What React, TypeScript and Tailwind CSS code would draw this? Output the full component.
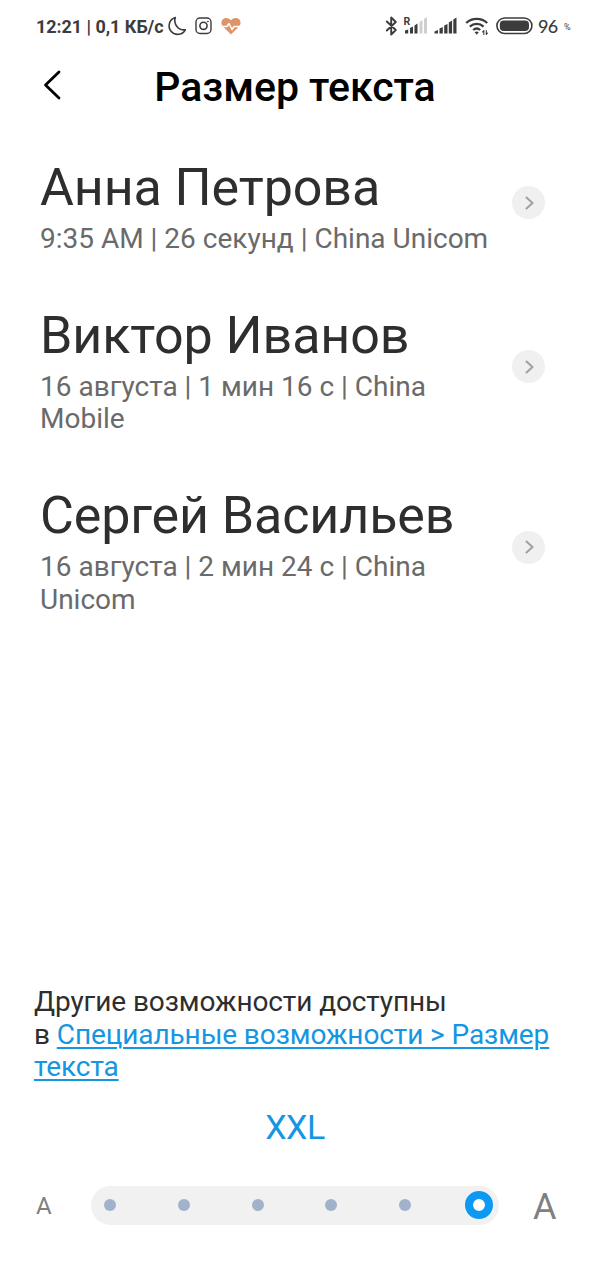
import { ReactNode } from "react";

interface Call {
    name: string;
    details: string;
}

const calls: Call[] = [
    { name: "Анна Петрова", details: "9:35 AM | 26 секунд | China Unicom" },
    { name: "Виктор Иванов", details: "16 августа | 1 мин 16 с | China Mobile" },
    { name: "Сергей Васильев", details: "16 августа | 2 мин 24 с | China Unicom" },
];

const sizes = ["XS", "S", "M", "L", "XL", "XXL"];

interface IconProps {
    width: number;
    height: number;
    className?: string;
    children: ReactNode;
}

function Icon({ width, height, className, children }: IconProps) {
    return (
        <svg
            width={width}
            height={height}
            viewBox={`0 0 ${width} ${height}`}
            fill="none"
            stroke="currentColor"
            strokeLinecap="round"
            strokeLinejoin="round"
            className={`shrink-0 ${className ?? ""}`}
        >
            {children}
        </svg>
    );
}

function StatusBar() {
    return (
        <div className="flex h-[52px] items-center pl-9 text-[#3c3c3c]">
            <span className="w-[130px] text-[18px] font-bold tracking-[-0.05px] whitespace-nowrap">
                12:21 | 0,1 КБ/с
            </span>
            <Icon width={20} height={20} className="ml-[1px]">
                <path
                    d="M8.300 1.500A8.600 8.600 0 1 0 18.300 13.800A9.400 9.400 0 0 1 8.300 1.500z"
                    strokeWidth="1.600"
                />
            </Icon>
            <Icon width={18} height={18} className="ml-[8px]">
                <rect x="1" y="1" width="15" height="15.500" rx="4" strokeWidth="1.400" />
                <circle cx="8.500" cy="8.800" r="3.600" strokeWidth="1.600" />
                <circle cx="12.800" cy="4.600" r="0.500" strokeWidth="0.800" />
            </Icon>
            <Icon width={20} height={18} className="ml-[8px]">
                <path
                    d="M10 17.500L2.200 9.800C-3 4 4.500-2.500 10 3.200C15.500-2.500 23 4 17.800 9.800z"
                    fill="#dd9468"
                    stroke="none"
                />
                <path d="M1 9.500h5l2-3 3 6 2-3h6" stroke="#fff" strokeWidth="1.500" />
            </Icon>
            <Icon width={14} height={20} className="ml-[144px]">
                <path d="M1.800 5.500l9 8.500-4.600 4.500V1.500l4.600 4.500-9 8.500" strokeWidth="1.900" />
            </Icon>
            {/* Roaming signal */}
            <Icon width={24} height={20} className="ml-[5px]">
                <g stroke="none" fill="currentColor">
                    <text x="-0.500" y="8.500" fontSize="10.500" fontWeight="700">R</text>
                    <path d="M1 14.500l3.200-1v4H1zM6 12l3-1.500v7H6zM10.500 9.500l3-2v10h-3z" />
                    <path d="M15.500 6l3-2v13.500h-3zM20 3l3-2v16.500h-3z" fill="#cfcfcf" />
                </g>
            </Icon>
            <Icon width={24} height={20} className="ml-[6px]">
                <path
                    d="M0.500 15.500l3.500-1.500v3.500H0.500zM5.500 12.500l3.300-1.500v6.500H5.500zM10.200 9.500l3.300-1.500v9.500h-3.300zM14.800 6.500l3.300-2v13h-3.300zM19.300 3.500l3.200-2v16h-3.200z"
                    fill="currentColor"
                    stroke="none"
                />
            </Icon>
            <Icon width={24} height={20} className="ml-[7px]">
                <path
                    d="M1.200 7c6-5.400 15-5.400 21 0M4.800 10.600c4-3.700 9.800-3.700 13.800 0M8.200 14c2.200-1.900 4.800-1.900 7 0"
                    strokeWidth="2.300"
                    strokeLinecap="butt"
                />
                <path d="M9.600 16.200q2.100-1.600 4.200 0L11.700 18.800z" fill="currentColor" stroke="none" />
                <path d="M18.800 18.500v-4l-1.300 1.500M21.300 14.500v4l1.300-1.500" strokeWidth="1.100" />
            </Icon>
            <Icon width={38} height={18} className="ml-[7px]">
                <rect x="0.900" y="1" width="35" height="15.500" rx="7.750" strokeWidth="1.600" />
                <rect x="3.800" y="3.600" width="29.200" height="10.400" rx="4" fill="currentColor" stroke="none" />
            </Icon>
            <span className="ml-[4px] w-[19px] font-['Lato'] text-[18px] font-medium tracking-[-0.8px]">96</span>
            <span className="ml-[7px] mt-1 text-[9px]">%</span>
        </div>
    );
}

function CallItem({ name, details }: Call) {
    return (
        <div className="flex items-center justify-between pr-[45px] pb-[49.3px] pl-10">
            <div className="w-[450px]">
                <h2 className="text-[52px] leading-[61px] tracking-[-0.1px] whitespace-nowrap text-[#2e2e2e]">{name}</h2>
                <p className="mt-[5px] text-[28px] leading-[32.5px] text-[#6a6a6a]">{details}</p>
            </div>
            <div className="mb-[7px] flex size-[33px] items-center justify-center rounded-full bg-[#f0f0f0] text-[#a0a0a0]">
                <Icon width={10} height={16} className="ml-0.5">
                    <path d="M1.500 2.500l6 5.500-6 5.500" strokeWidth="2" />
                </Icon>
            </div>
        </div>
    );
}

function SizeSlider() {
    return (
        <div className="flex h-[39px] items-center text-[#808080]">
            <span className="w-[91px] pt-0.5 pl-9 text-[24px]">A</span>
            <div className="flex h-[39px] w-[408px] items-center justify-between rounded-full bg-[#f1f1f1] pr-1.5 pl-[13px]">
                {sizes.map((size) =>
                    size === "XXL" ? (
                        <div key={size} className="-ml-2 size-7 rounded-full border-8 border-[#0d99f2] bg-white" />
                    ) : (
                        <div key={size} className="size-3 rounded-full bg-[#a1b2ca]" />
                    )
                )}
            </div>
            <span className="pt-1 pl-[34px] text-[36px]">A</span>
        </div>
    );
}

export default function App() {
    return (
        <div className="flex h-[1280px] w-[590px] flex-col overflow-hidden bg-white font-['Roboto',sans-serif]">
            <StatusBar />
            <header className="relative flex h-[70px] items-center justify-center text-black">
                <Icon width={20} height={32} className="absolute top-[17px] left-[42px]">
                    <path d="M17 3L3.500 16 17 29" strokeWidth="2.800" />
                </Icon>
                <h1 className="pt-0.5 text-[41px] font-medium tracking-[-0.03px]">Размер текста</h1>
            </header>
            <main className="flex flex-1 flex-col pt-[35px]">
                {calls.map((call) => (
                    <CallItem key={call.name} {...call} />
                ))}
            </main>
            <footer className="flex h-[294px] shrink-0 flex-col">
                <p className="pl-[34px] text-[28px] leading-[32.500px] tracking-[-0.1px] text-[#2e2e2e]">
                    Другие возможности доступны
                    <br />в{" "}
                    <a href="#" className="text-[#1496e2] underline decoration-[1.500px] underline-offset-[3px]">
                        Специальные возможности &gt; Размер
                        <br />
                        текста
                    </a>
                </p>
                <div className="mt-[23px] mb-[39px] text-center text-[34px] leading-10 tracking-[-0.5px] text-[#1496e2]">XXL</div>
                <SizeSlider />
            </footer>
        </div>
    );
}
